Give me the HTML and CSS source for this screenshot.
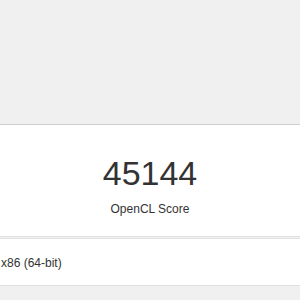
FILE: index.html
```html
<!DOCTYPE html>
<html>

<head>
    <title>OpenCL Score</title>
    <meta charset="utf-8" />
    <link rel="stylesheet" href="styles.css">
</head>

<body>
    <div class="page">
        <div class="scoreCard">
            <div class="score">45144</div>
            <div class="scoreLabel">OpenCL Score</div>
        </div>
        <div class="infoCard">
            <div class="infoRow">x86 (64-bit)</div>
        </div>
    </div>
</body>

</html>
```

FILE: styles.css
```css
body {
    margin: 0;
    padding: 0;
    background-color: #f0f0f0;
    font-family: "Liberation Sans", Arial, sans-serif;
    color: #333;
    overflow: hidden;
}

.page {
    padding-top: 124px;
}

/* 分数卡片 */
.scoreCard {
    background-color: #fff;
    border-top: 1px solid #cfcfcf;
    border-bottom: 1px solid #e2e2e2;
    padding: 28px 0 19px;
    text-align: center;
}

.score {
    font-size: 34px;
    line-height: 40px;
}

.scoreLabel {
    margin-top: 8px;
    font-size: 12px;
    line-height: 16px;
}

/* 信息 */
.infoCard {
    margin-top: 1px;
    background-color: #fff;
    border-top: 1px solid #e2e2e2;
    border-bottom: 1px solid #e0e0e0;
    box-shadow: 0 1px 1px rgba(0, 0, 0, 0.04);
}

.infoRow {
    padding: 16px 0 14px 1px;
    font-size: 12px;
    line-height: 16px;
}
```
